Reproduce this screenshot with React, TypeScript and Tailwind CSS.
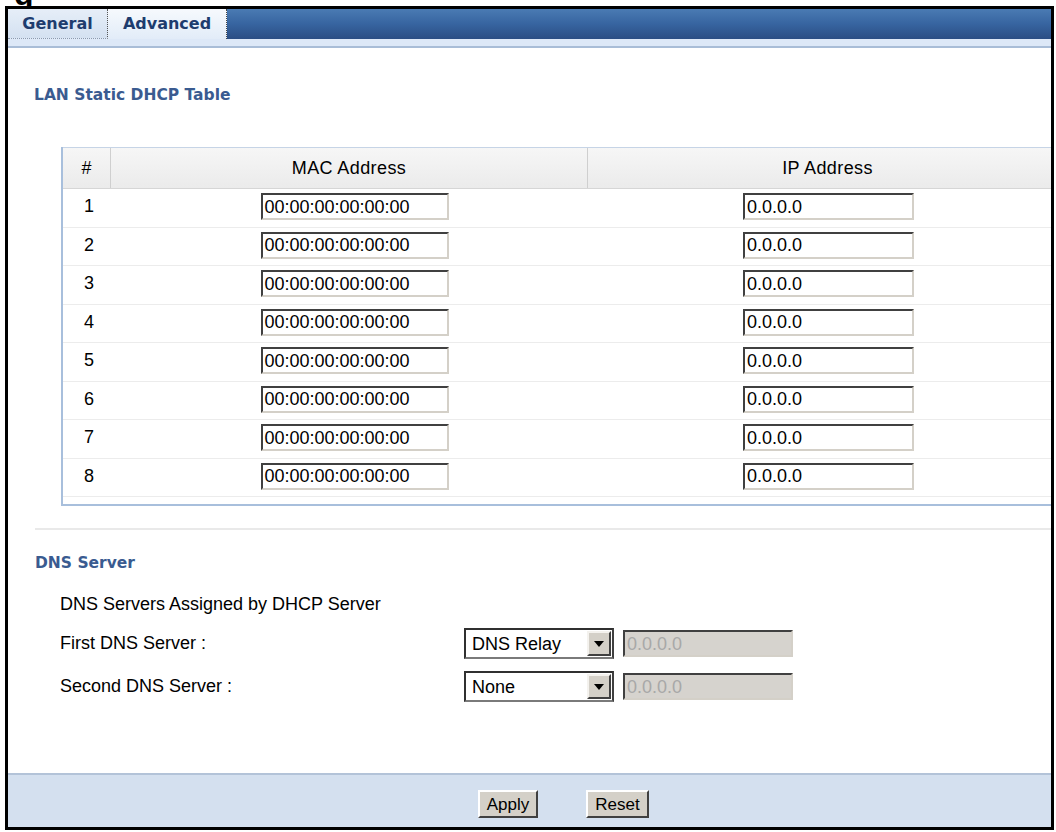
import React from 'react';

const rows = [1, 2, 3, 4, 5, 6, 7, 8];

const inset =
  'border-2 border-t-[#404040] border-l-[#404040] border-r-[#d4d0c8] border-b-[#d4d0c8]';

function TextBox({ value, width, disabled }: { value: string; width: string; disabled?: boolean }) {
  return (
    <div
      className={`${width} ${inset} flex h-[27px] items-center px-[2px] text-[18px] leading-none ${
        disabled ? 'bg-[#d6d3ce] text-[#a8a8a8]' : 'bg-white text-black'
      }`}
    >
      {value}
    </div>
  );
}

function Select({ value }: { value: string }) {
  return (
    <div className="flex h-[31px] w-[150px] items-center justify-between border-2 border-t-[#303030] border-l-[#303030] border-r-[#404040] border-b-[#7a7a7a] bg-white pl-[6px] pr-[1px] text-[18px] leading-none">
      <span>{value}</span>
      <div className="flex h-[25px] w-[24px] items-center justify-center border-2 border-t-[#f4f2ee] border-l-[#f4f2ee] border-r-[#404040] border-b-[#404040] bg-[#d4d0c8]">
        <svg width="10" height="6" viewBox="0 0 10 6">
          <polygon points="0,0 10,0 5,6" fill="#000" />
        </svg>
      </div>
    </div>
  );
}

function Button({ label, width }: { label: string; width: string }) {
  return (
    <button
      type="button"
      className={`${width} h-[28px] border-2 border-t-[#ffffff] border-l-[#ffffff] border-r-[#404040] border-b-[#404040] bg-[#d4d0c8] text-[17px] leading-none text-black`}
    >
      {label}
    </button>
  );
}

export default function App() {
  return (
    <div
      className="h-[832px] w-[1056px] overflow-hidden bg-white text-black"
      style={{ fontFamily: '"Liberation Sans", Arial, sans-serif' }}
    >
      {/* tail of the caption above the frame */}
      <div className="h-[6px] overflow-hidden pl-[14px]">
        <div className="-mt-[22px] text-[32px] font-bold leading-[32px]">g</div>
      </div>

      <div className="ml-[5px] h-[824px] w-[1049px] overflow-hidden border-[3px] border-black">
        <div className="flex h-full w-[1111px] flex-col">
          {/* tabs */}
          <div
            className="flex h-[30px] bg-linear-to-b from-[#4a7bb3] via-[#3764a0] to-[#2b4e84] text-[16px] font-bold text-[#1e3c6e]"
            style={{ fontFamily: '"DejaVu Sans", Verdana, sans-serif' }}
          >
            <div className="flex w-[100px] items-center justify-center border-r border-b border-dotted border-r-[#555] border-b-[#8a9ab0] bg-linear-to-b from-[#e6eef8] to-[#d4e1f1]">
              General
            </div>
            <div className="flex w-[119px] items-center justify-center border-r border-dotted border-r-[#444] bg-linear-to-b from-[#f6f9fd] to-[#e2ecf8]">
              Advanced
            </div>
          </div>
          <div className="h-[9px] border-b-2 border-[#a9bdd7] bg-[#dde8f7]" />

          {/* LAN Static DHCP Table */}
          <div
            className="mt-[37px] pl-[26px] text-[15.5px] font-bold leading-[20px] text-[#3a5b90]"
            style={{ fontFamily: '"DejaVu Sans", Verdana, sans-serif' }}
          >
            LAN Static DHCP Table
          </div>

          <div className="mt-[42px] ml-[53px] mr-[52px] border-l-2 border-[#a8bfdc] text-[18px]">
            <div className="flex h-[42px] border-t border-b border-t-[#c6d4e6] border-b-[#d6d6d6] bg-linear-to-b from-[#f6f6f6] to-[#ebebeb]">
              <div className="flex w-[48px] items-center justify-center border-r border-[#cfcfcf]">#</div>
              <div className="flex w-[477px] items-center justify-center border-r border-[#cfcfcf] tracking-[0.4px]">
                MAC Address
              </div>
              <div className="flex flex-1 items-center justify-center tracking-[0.4px]">IP Address</div>
            </div>
            {rows.map((n) => (
              <div key={n} className="flex h-[38.5px] items-center border-b border-[#ececec] pb-[2px]">
                <div className="w-[48px] pl-[21px]">{n}</div>
                <div className="flex w-[477px] justify-center pl-[10px]">
                  <TextBox value="00:00:00:00:00:00" width="w-[188px]" />
                </div>
                <div className="flex flex-1 justify-center pl-[2px]">
                  <TextBox value="0.0.0.0" width="w-[171px]" />
                </div>
              </div>
            ))}
            <div className="h-[9px] border-b-2 border-[#a8bfdc]" />
          </div>

          <div className="mt-[22px] ml-[27px] h-[2px] bg-[#e9e9e9]" />

          {/* DNS Server */}
          <div
            className="mt-[23px] pl-[27px] text-[15.5px] font-bold leading-[20px] text-[#3a5b90]"
            style={{ fontFamily: '"DejaVu Sans", Verdana, sans-serif' }}
          >
            DNS Server
          </div>
          <div className="mt-[20px] pl-[52px] text-[18px] leading-[22px]">DNS Servers Assigned by DHCP Server</div>

          <div className="mt-[13px] flex items-center pl-[52px] text-[18px]">
            <div className="w-[404px]">First DNS Server :</div>
            <Select value="DNS Relay" />
            <div className="ml-[9px]">
              <TextBox value="0.0.0.0" width="w-[170px]" disabled />
            </div>
          </div>
          <div className="mt-[12px] flex items-center pl-[52px] text-[18px]">
            <div className="w-[404px]">Second DNS Server :</div>
            <Select value="None" />
            <div className="ml-[9px]">
              <TextBox value="0.0.0.0" width="w-[170px]" disabled />
            </div>
          </div>

          {/* buttons */}
          <div className="mt-auto flex h-[54px] justify-center gap-[48px] border-t-2 border-[#b3c3d8] bg-[#d4e0ef] pt-[15px]">
            <Button label="Apply" width="w-[60px]" />
            <Button label="Reset" width="w-[63px]" />
          </div>
        </div>
      </div>
    </div>
  );
}
